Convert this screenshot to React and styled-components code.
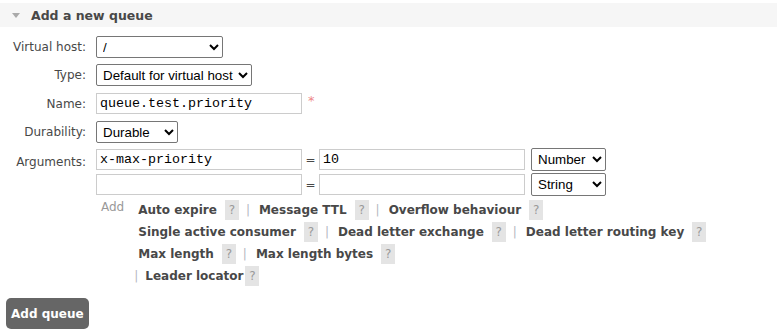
import React from "react";
import styled, { createGlobalStyle } from "styled-components";

const Global = createGlobalStyle`
  body {
    margin: 0;
    background: #fff;
    color: #484848;
    font-family: "DejaVu Sans", Verdana, sans-serif;
    font-size: 12px;
  }
`;

const Page = styled.div`
  width: 777px;
  height: 333px;
  padding-top: 3px;
  box-sizing: border-box;
`;

const Header = styled.div`
  height: 24px;
  background: #f6f6f6;
  display: flex;
  align-items: center;
  padding-left: 12px;
  gap: 11px;
  font-weight: bold;
  font-size: 12.5px;
  color: #484848;
`;

const Arrow = styled.span`
  width: 0;
  height: 0;
  border-left: 4px solid transparent;
  border-right: 4px solid transparent;
  border-top: 5px solid #aaa;
  margin-top: 1px;
`;

const Form = styled.div`
  display: grid;
  grid-template-columns: 86px 1fr;
  column-gap: 10px;
  padding-top: 9px;
`;

const Label = styled.div`
  text-align: right;
  padding-top: ${(p) => p.$top || 4}px;
  height: ${(p) => p.$h || 28}px;
  box-sizing: border-box;
  white-space: nowrap;
`;

const Field = styled.div`
  display: flex;
  flex-direction: column;
  gap: ${(p) => p.$gap ?? 0}px;
  height: ${(p) => (p.$h ? p.$h + "px" : "auto")};
`;

const Line = styled.div`
  display: flex;
  align-items: center;
  gap: ${(p) => p.$gap ?? 6}px;
`;

const Select = styled.select`
  width: ${(p) => p.$w}px;
  height: ${(p) => p.$h || 22}px;
  font-family: "Liberation Sans", Arial, sans-serif;
  font-size: 13.33px;
  color: #000;
  border: 1px solid #767676;
  border-radius: 2px;
  background: #fff;
  padding: 0 0 0 2px;
  margin: 0 0 0 ${(p) => p.$ml || 0}px;
`;

const Input = styled.input`
  width: 206px;
  height: 21px;
  box-sizing: border-box;
  border: 1px solid #ccc;
  font-family: "Liberation Mono", "Courier New", monospace;
  font-size: 13.33px;
  color: #000;
  padding: 0 3px;
  margin: 0;
`;

const Required = styled.span`
  color: #e88;
  font-size: 13px;
  margin-top: -6px;
`;

const Eq = styled.span`
  width: 17px;
  text-align: center;
  color: #484848;
`;

const Extras = styled.div`
  display: flex;
  gap: 14px;
  padding-top: 2px;
  padding-left: 5px;
`;

const AddLabel = styled.span`
  color: #999;
  line-height: 14px;
`;

const Links = styled.div`
  display: flex;
  flex-direction: column;
  gap: 2px;
`;

const LinkLine = styled.div`
  display: flex;
  align-items: center;
  height: 20px;
  margin-left: ${(p) => p.$indent || 0}px;
`;

const OptLink = styled.span`
  font-weight: bold;
  color: #484848;
  margin-right: ${(p) => p.$mr ?? 8}px;
`;

const Help = styled.span`
  display: inline-block;
  width: 14px;
  height: 20px;
  line-height: 20px;
  text-align: center;
  background: #e4e4e4;
  color: #999;
  font-size: 12px;
`;

const Pipe = styled.span`
  color: #b4b8c0;
  margin: 0 ${(p) => p.$r ?? 9}px 0 ${(p) => p.$l ?? 7}px;
`;

const Button = styled.button`
  display: block;
  margin: 12px 0 0 6px;
  height: 31px;
  padding: 0 5px;
  background: #666;
  color: #fff;
  border: none;
  border-radius: 5px;
  font-family: "DejaVu Sans", Verdana, sans-serif;
  font-size: 12px;
  font-weight: bold;
`;

const lines = [
  ["Auto expire", "Message TTL", "Overflow behaviour"],
  ["Single active consumer", "Dead letter exchange", "Dead letter routing key"],
  ["Max length", "Max length bytes"],
];

function ArgRow({ k, v, type }) {
  return (
    <Line $gap={0}>
      <Input defaultValue={k} />
      <Eq>=</Eq>
      <Input defaultValue={v} />
      <Select $w={75} $h={23} $ml={6}>
        <option>{type}</option>
      </Select>
    </Line>
  );
}

export default function App() {
  return (
    <Page>
      <Global />
      <Header>
        <Arrow />
        Add a new queue
      </Header>
      <Form>
        <Label>Virtual host:</Label>
        <Field $h={28}>
          <Select $w={127} defaultValue="/">
            <option>/</option>
          </Select>
        </Field>

        <Label $h={29}>Type:</Label>
        <Field $h={29}>
          <Select $w={156}>
            <option>Default for virtual host</option>
          </Select>
        </Field>

        <Label>Name:</Label>
        <Field $h={28}>
          <Line>
            <Input defaultValue="queue.test.priority" />
            <Required>*</Required>
          </Line>
        </Field>

        <Label $h={27}>Durability:</Label>
        <Field $h={27}>
          <Select $w={82}>
            <option>Durable</option>
          </Select>
        </Field>

        <Label $top={7} $h={50}>Arguments:</Label>
        <Field $gap={2}>
          <ArgRow k="x-max-priority" v="10" type="Number" />
          <ArgRow k="" v="" type="String" />
          <Extras>
            <AddLabel>Add</AddLabel>
            <Links>
              {lines.map((items, i) => (
                <LinkLine key={i}>
                  {items.map((t, j) => (
                    <React.Fragment key={t}>
                      {j > 0 && <Pipe>|</Pipe>}
                      <OptLink>{t}</OptLink>
                      <Help>?</Help>
                    </React.Fragment>
                  ))}
                </LinkLine>
              ))}
              <LinkLine $indent={-4}>
                <Pipe $l={0} $r={7}>|</Pipe>
                <OptLink $mr={2}>Leader locator</OptLink>
                <Help>?</Help>
              </LinkLine>
            </Links>
          </Extras>
        </Field>
      </Form>
      <Button>Add queue</Button>
    </Page>
  );
}
